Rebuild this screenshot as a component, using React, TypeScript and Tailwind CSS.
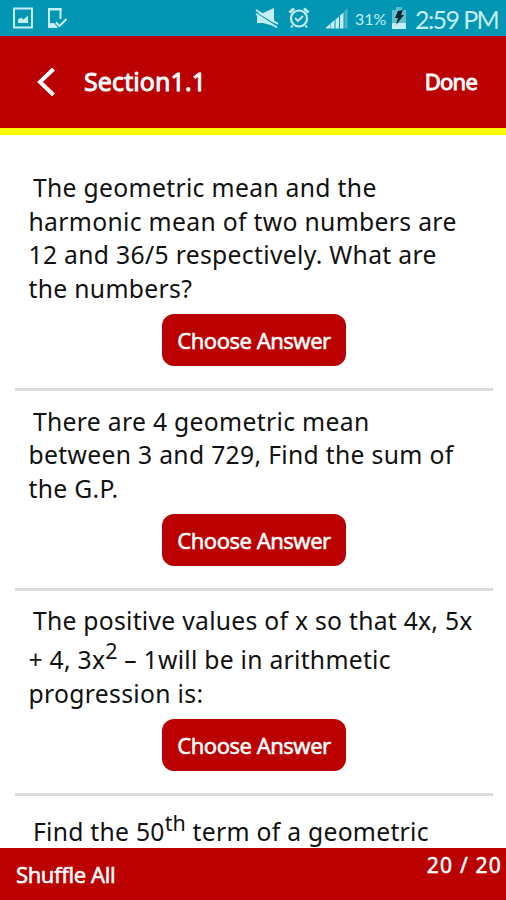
import type { ReactNode } from "react";

interface Line {
  content: ReactNode;
  className?: string;
}

interface Question {
  id: number;
  className: string;
  lines: Line[];
}

const QUESTIONS: Question[] = [
  {
    id: 1,
    className: "h-[256px] pt-[36px]",
    lines: [
      { content: "The geometric mean and the", className: "pl-[4.400px]" },
      { content: "harmonic mean of two numbers are" },
      { content: "12 and 36/5 respectively. What are" },
      { content: "the numbers?" },
    ],
  },
  {
    id: 2,
    className: "h-[200px] pt-[13.500px]",
    lines: [
      { content: "There are 4 geometric mean", className: "pl-[4.400px]" },
      { content: "between 3 and 729, Find the sum of" },
      { content: "the G.P." },
    ],
  },
  {
    id: 3,
    className: "h-[205px] pt-[13px]",
    lines: [
      { content: "The positive values of x so that 4x, 5x", className: "pl-[4.400px] tracking-[0.270px]" },
      {
        content: (
          <>
            + 4, 3x<Sup>2</Sup> – 1will be in arithmetic
          </>
        ),
        className: "pt-[5.600px] tracking-[0.270px]",
      },
      { content: "progression is:" },
    ],
  },
];

function Sup({ children }: { children: ReactNode }) {
  return <sup className="relative -top-[10px] align-baseline text-[21.500px] leading-none tracking-normal">{children}</sup>;
}

function StatusBar() {
  return (
    <div className="flex h-9 shrink-0 items-center bg-[#0396b4] pr-[7px] pl-[12px] text-[#c5eef5]">
      <svg viewBox="0 0 22 22" className="h-[22px] w-[22px]" fill="none">
        <rect x="2" y="1.5" width="18" height="19" stroke="currentColor" strokeWidth="2" />
        <path d="M6 16v-3.5l3-2 2.500 2L16 8.500V16z" fill="currentColor" />
      </svg>
      <svg viewBox="0 0 22 22" className="ml-[12px] h-[22px] w-[22px]" fill="none">
        <path d="M14.500 12V2H3v18h8" stroke="currentColor" strokeWidth="2" />
        <path d="M2 16h6l4 4.500H2zM2 1h13.500v2.500H2z" fill="currentColor" />
        <path d="m10 15.500 3.500 3.500 7-7" stroke="currentColor" strokeWidth="2" />
      </svg>

      <div className="ml-auto flex items-center">
        <svg viewBox="0 0 24 22" className="h-[22px] w-6" fill="none">
          <path d="M2 6h6l11-5v18L8 16H2z" fill="currentColor" />
          <path d="m0 5.500 23 14" stroke="#0396b4" strokeWidth="2" />
          <path d="m1 3 22 14M1 7l21 13.500" stroke="currentColor" strokeWidth="1.800" />
        </svg>
        <svg viewBox="0 0 22 22" className="ml-[9px] h-[22px] w-[22px]" fill="none" stroke="currentColor">
          <circle cx="11" cy="11.500" r="8" strokeWidth="2.200" />
          <path d="m1.500 5.500 4.500-4M20.500 5.500 16 1.500" strokeWidth="3" />
          <path d="m4.500 18.500-1.500 2M17.500 18.500l1.500 2" strokeWidth="2" />
          <path d="m7 11 3 3 5-5" strokeWidth="1.800" />
        </svg>
        <svg viewBox="0 0 24 22" className="ml-[15px] h-[22px] w-6" fill="currentColor">
          <path d="M1 21.500v-1L5 17v4.500zM5.500 21.500V16.500l4-3.500v8.500zM10.500 21.500v-9l3.500-3v12zM15 21.500V8.500L18.500 5.500v16z" />
          <path d="M19.500 21.500V4.500L22.500 1v20.500z" opacity=".35" />
        </svg>
        <span className="ml-[6px] w-[33px] pt-px font-['Lato'] text-[16px] leading-[22px] whitespace-nowrap">31%</span>
        <svg viewBox="0 0 14 22" className="ml-[4px] h-[22px] w-[14px]">
          <path d="M0 3h4V0h6v3h4v19H0z" fill="#62bdcd" />
          <path d="M0 16h14v6H0z" fill="#c5eef5" />
          <path d="m6 4 5-1-2 5h3l-8 10 2-7H3z" fill="#06262c" />
        </svg>
        <span className="ml-[9px] w-[84px] pt-[2px] font-['Lato'] text-[25px] leading-[30px] tracking-[-1.600px] whitespace-nowrap">
          2:59 PM
        </span>
      </div>
    </div>
  );
}

function Header() {
  return (
    <header className="flex h-[99px] shrink-0 items-center border-b-[7px] border-[#ffff00] bg-[#ba0000] pr-[29px] pl-[37px] text-white [-webkit-text-stroke:0.9px]">
      <svg viewBox="0 0 18 28" className="h-7 w-[18px]" fill="none" aria-label="Back">
        <path d="M16.500 1 3 14l13.500 13" stroke="currentColor" strokeWidth="4" />
      </svg>
      <h1 className="ml-[29px] text-[25px] tracking-[0.100px]">Section1.1</h1>
      <button type="button" className="ml-auto -mt-[2px] text-[22px] tracking-[-0.800px]">
        Done
      </button>
    </header>
  );
}

function QuestionText({ lines }: { lines: Line[] }) {
  return (
    <div className="pl-[13.500px] text-[24.700px] leading-[33.700px] tracking-[0.320px] whitespace-pre text-[#111111]">
      {lines.map((line, index) => (
        <div key={index} className={line.className}>
          {line.content}
        </div>
      ))}
    </div>
  );
}

function QuestionItem({ question }: { question: Question }) {
  return (
    <li className={`${question.className} border-b-[3px] border-[#dcdcdc]`}>
      <QuestionText lines={question.lines} />
      <button
        type="button"
        className="mx-auto mt-[8px] block h-[52px] w-[184px] rounded-xl bg-[#ba0000] pt-px text-[22px] tracking-[-0.500px] whitespace-nowrap text-white [-webkit-text-stroke:0.5px]"
      >
        Choose Answer
      </button>
    </li>
  );
}

export default function App() {
  return (
    <div className="flex h-[900px] w-[506px] flex-col overflow-hidden bg-white font-['Noto_Sans',sans-serif]">
      <StatusBar />
      <Header />
      <ul className="min-h-0 flex-1 overflow-hidden pr-[13px] pl-[15px]">
        {QUESTIONS.map((question) => (
          <QuestionItem key={question.id} question={question} />
        ))}
        <li className="pt-[18.500px]">
          <QuestionText
            lines={[
              {
                content: (
                  <>
                    Find the 50<Sup>th</Sup> term of a geometric
                  </>
                ),
                className: "pl-[4.400px] tracking-[0.280px]",
              },
            ]}
          />
        </li>
      </ul>
      <footer className="flex h-[52px] shrink-0 items-start justify-between bg-[#ba0000] pr-[4px] pl-[16px] text-white [-webkit-text-stroke:0.5px]">
        <button type="button" className="mt-[11px] text-[22px] leading-[30px] tracking-[-0.400px]">
          Shuffle All
        </button>
        <span className="mt-[2px] text-[21px] leading-[30px] tracking-[1.200px]">20 / 20</span>
      </footer>
    </div>
  );
}
